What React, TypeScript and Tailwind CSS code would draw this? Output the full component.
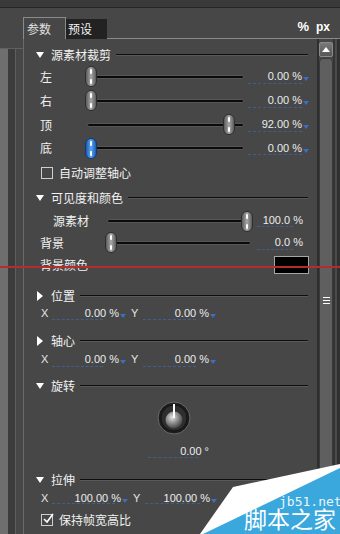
import React from "react";

const cjk = { fontFamily: '"Noto Sans CJK SC", "Noto Sans", sans-serif' };
const num = { fontFamily: '"Liberation Sans", Arial, sans-serif' };

function Caret() {
  return <span className="ml-[1px] mt-[5px] h-0 w-0 shrink-0 border-l-[3px] border-r-[3px] border-t-[4px] border-l-transparent border-r-transparent border-t-[#3b6fc2]" />;
}

function Header({ title, open }: { title: string; open: boolean }) {
  return (
    <div className="flex h-[20px] items-center pl-[12px]">
      {open ? (
        <span className="h-0 w-0 border-l-[4px] border-r-[4px] border-t-[6px] border-l-transparent border-r-transparent border-t-white" />
      ) : (
        <span className="ml-[1px] mr-[1px] h-0 w-0 border-b-[5px] border-l-[6px] border-t-[5px] border-b-transparent border-l-white border-t-transparent" />
      )}
      <span className="ml-[7px] text-[12px] leading-none text-[#f2f2f2]" style={cjk}>
        {title}
      </span>
      <div className="ml-[5px] mr-[9px] h-[2px] flex-1 border-b border-t border-b-[#595959] border-t-[#0e0e0e]" />
    </div>
  );
}

function Thumb({ blue }: { blue?: boolean }) {
  return (
    <div
      className={`relative h-[21px] w-[12px] rounded-[6px] border ${
        blue
          ? "border-[#0f3a70] bg-gradient-to-r from-[#1d5cb0] via-[#5aa8f5] to-[#1d5cb0]"
          : "border-[#2e2e2e] bg-gradient-to-r from-[#5c5c5c] via-[#a9a9a9] to-[#5c5c5c]"
      }`}
    >
      <div className="absolute left-[4px] top-[2px] h-[5px] w-[2px] rounded bg-white" />
      <div className="absolute bottom-[2px] left-[4px] h-[5px] w-[2px] rounded bg-white" />
    </div>
  );
}

function Track({ width, thumb, blue }: { width: number; thumb: number; blue?: boolean }) {
  return (
    <div className="relative flex h-full shrink-0 items-center" style={{ width }}>
      <div className="h-[4px] w-full rounded-full border border-[#555] bg-[#0b0b0b]" />
      <div className="absolute top-[1px]" style={{ left: thumb }}>
        <Thumb blue={blue} />
      </div>
    </div>
  );
}

function Value({
  text,
  width,
  line,
  lineLeft = 0,
  bottom = 5,
  caret,
}: {
  text: string;
  width: number;
  line: number;
  lineLeft?: number;
  bottom?: number;
  caret?: boolean;
}) {
  return (
    <div className="flex h-full shrink-0 items-center">
      <div className="relative flex h-full items-center justify-end" style={{ width }}>
        <span className="whitespace-nowrap text-[11px] leading-none text-[#ececec]" style={num}>
          {text}
        </span>
        <div className="absolute border-b border-dashed border-[#3d5f92]" style={{ left: lineLeft, width: line, bottom }} />
      </div>
      {caret && <Caret />}
    </div>
  );
}

function SliderRow({ label, thumb, value, blue }: { label: string; thumb: number; value: string; blue?: boolean }) {
  return (
    <div className="flex h-[24px] items-center">
      <div className="w-[63px] shrink-0 pl-[16px] text-[12px] leading-none text-[#f2f2f2]" style={cjk}>
        {label}
      </div>
      <Track width={157} thumb={thumb} blue={blue} />
      <div className="ml-[4px] h-full">
        <Value text={value} width={54} line={54} caret />
      </div>
    </div>
  );
}

function XYRow({ x, y, h, xw, yw }: { x: string; y: string; h: number; xw: [number, number]; yw: [number, number] }) {
  return (
    <div className="flex items-center pl-[17px]" style={{ height: h }}>
      <span className="w-[11px] shrink-0 text-[11px] leading-none text-[#e6e6e6]" style={num}>
        X
      </span>
      <Value text={x} width={xw[0]} line={xw[1]} bottom={2} caret />
      <span className="ml-[5px] w-[12px] shrink-0 text-[11px] leading-none text-[#e6e6e6]" style={num}>
        Y
      </span>
      <Value text={y} width={yw[0]} line={yw[1]} bottom={2} caret />
    </div>
  );
}

function Check({ label, checked }: { label: string; checked?: boolean }) {
  return (
    <div className="flex h-full items-center pl-[17px]">
      <div className="relative h-[12px] w-[12px] border border-[#cfcfcf]">
        {checked && (
          <svg viewBox="0 0 12 12" className="absolute left-[0px] top-[-2px] h-[12px] w-[12px]">
            <path d="M2 6 L5 9 L11 1" fill="none" stroke="white" strokeWidth="1.6" />
          </svg>
        )}
      </div>
      <span className="ml-[6px] text-[12px] leading-none text-[#f2f2f2]" style={cjk}>
        {label}
      </span>
    </div>
  );
}

function Knob() {
  return (
    <svg width="34" height="34" viewBox="0 0 34 34">
      <defs>
        <radialGradient id="kb" cx="0.4" cy="0.35" r="0.7">
          <stop offset="0" stopColor="#e4e4e4" />
          <stop offset="0.5" stopColor="#8c8c8c" />
          <stop offset="1" stopColor="#3a3a3a" />
        </radialGradient>
      </defs>
      <circle cx="17" cy="17" r="16" fill="#1c1c1c" stroke="#6a6a6a" strokeWidth="1" />
      <circle cx="17" cy="17" r="13" fill="#2e2e2e" stroke="#151515" />
      <circle cx="17" cy="19" r="8.5" fill="url(#kb)" />
      <line x1="17" y1="3" x2="17" y2="17" stroke="white" strokeWidth="2" />
    </svg>
  );
}

export default function App() {
  return (
    <div className="relative flex h-[534px] w-[340px] flex-col overflow-hidden bg-[#474747]">
      <div className="h-[8px] shrink-0 border-b border-[#262626] bg-[#3a3a3a]" />
      <div className="flex min-h-0 flex-1">
        <div className="flex w-[23px] shrink-0 flex-col">
          <div className="h-[40px]" />
          <div className="flex flex-1 border-t border-[#606060]">
            <div className="w-[8px] bg-[#6e6e6e]" />
            <div className="w-[7px] bg-[#3c3c3c]" />
            <div className="w-[1px] bg-[#5e5e5e]" />
          </div>
        </div>
        <div className="flex min-w-0 flex-1 flex-col">
          <div className="flex h-[31px] shrink-0 items-end">
            <div
              className="flex h-[22px] w-[43px] shrink-0 items-center border-l border-r border-t border-[#8a8a8a] pl-[3px] text-[12px] text-[#e2e2e2]"
              style={cjk}
            >
              参数
            </div>
            <div className="flex h-[20px] w-[41px] shrink-0 items-center bg-[#222] pl-[2px] text-[12px] text-[#f2f2f2]" style={cjk}>
              预设
            </div>
            <div className="flex h-[22px] flex-1 items-center justify-end border-b border-[#8a8a8a] pb-[2px] pr-[10px]">
              <span className="text-[13px] font-bold leading-none text-white" style={num}>
                %
              </span>
              <span className="ml-[7px] text-[12px] font-bold leading-none text-white" style={num}>
                px
              </span>
            </div>
          </div>
          <div className="flex min-h-0 flex-1">
            <div className="flex min-w-0 flex-1 flex-col border-l border-[#6a6a6a] pt-[6px]">
              <Header title="源素材裁剪" open />
              <SliderRow label="左" thumb={-2} value="0.00 %" />
              <SliderRow label="右" thumb={-2} value="0.00 %" />
              <SliderRow label="顶" thumb={136} value="92.00 %" />
              <SliderRow label="底" thumb={-2} value="0.00 %" blue />
              <div className="h-[25px]">
                <Check label="自动调整轴心" />
              </div>
              <div className="flex h-[25px] flex-col justify-center">
                <Header title="可见度和颜色" open />
              </div>
              <div className="flex h-[21px] items-center">
                <div className="w-[83px] shrink-0 pl-[29px] text-[12px] leading-none text-[#f2f2f2]" style={cjk}>
                  源素材
                </div>
                <Track width={144} thumb={134} />
                <Value text="100.0 %" width={52} line={36} lineLeft={6} bottom={4} />
              </div>
              <div className="flex h-[24px] items-center">
                <div className="w-[83px] shrink-0 pl-[16px] text-[12px] leading-none text-[#f2f2f2]" style={cjk}>
                  背景
                </div>
                <Track width={144} thumb={-2} />
                <Value text="0.0 %" width={52} line={36} lineLeft={6} bottom={5} />
              </div>
              <div className="flex h-[21px] items-center">
                <div className="flex-1 pl-[16px] text-[12px] leading-none text-[#f2f2f2]" style={cjk}>
                  背景颜色
                </div>
                <div className="mr-[8px] h-[18px] w-[35px] border border-[#a6a6a6] bg-black" />
              </div>
              <div className="mt-[10px]">
                <Header title="位置" open={false} />
              </div>
              <XYRow x="0.00 %" y="0.00 %" h={16} xw={[67, 51]} yw={[66, 53]} />
              <div className="mt-[9px]">
                <Header title="轴心" open={false} />
              </div>
              <XYRow x="0.00 %" y="0.00 %" h={18} xw={[67, 51]} yw={[66, 53]} />
              <div className="mt-[7px]">
                <Header title="旋转" open />
              </div>
              <div className="flex h-[44px] items-center pl-[133px]">
                <Knob />
              </div>
              <div className="flex h-[24px] items-center pl-[124px]">
                <Value text="0.00 °" width={61} line={50} bottom={5} />
              </div>
              <div className="mt-[7px]">
                <Header title="拉伸" open />
              </div>
              <XYRow x="100.00 %" y="100.00 %" h={16} xw={[69, 63]} yw={[65, 55]} />
              <div className="h-[28px]">
                <Check label="保持帧宽高比" checked />
              </div>
            </div>
            <div className="flex w-[23px] shrink-0">
              <div className="w-[2px] bg-[#2e2e2e]" />
              <div className="flex w-[14px] flex-col pt-[3px]">
                <div className="flex h-[15px] items-center justify-center rounded-[2px] border border-[#8a8a8a] bg-gradient-to-b from-[#7a7a7a] to-[#555]">
                  <span className="h-0 w-0 border-b-[5px] border-l-[4px] border-r-[4px] border-b-white border-l-transparent border-r-transparent" />
                </div>
                <div className="mt-[1px] flex flex-1 flex-col items-center rounded-t-[4px] border border-[#3a3a3a] bg-[#5f5f5f] pt-[238px]">
                  <div className="h-[1px] w-[7px] bg-white" />
                  <div className="mt-[2px] h-[1px] w-[7px] bg-white" />
                  <div className="mt-[2px] h-[1px] w-[7px] bg-white" />
                </div>
              </div>
              <div className="w-[2px] bg-[#353535]" />
              <div className="w-[2px] bg-[#4b4b4b]" />
              <div className="w-[3px] bg-[#303030]" />
            </div>
          </div>
        </div>
      </div>

      <div className="absolute left-0 top-[266px] h-[2px] w-full bg-[#b42c2c]" />

      <svg className="absolute left-[200px] top-[455px]" width="140" height="79" viewBox="0 0 140 79">
        <polygon points="0,79 33,32 140,9 140,79" fill="#ffffff" />
        <polygon points="3,79 140,13 140,79" fill="#3aa7dd" />
      </svg>
      <span
        className="absolute left-[279px] top-[495px] text-[13px] leading-none text-[#e9f6fc]"
        style={{ fontFamily: '"DejaVu Sans Mono", monospace' }}
      >
        jb51.net
      </span>
      <span className="absolute left-[244px] top-[507px] text-[23px] leading-none text-white" style={cjk}>
        脚本之家
      </span>
    </div>
  );
}
